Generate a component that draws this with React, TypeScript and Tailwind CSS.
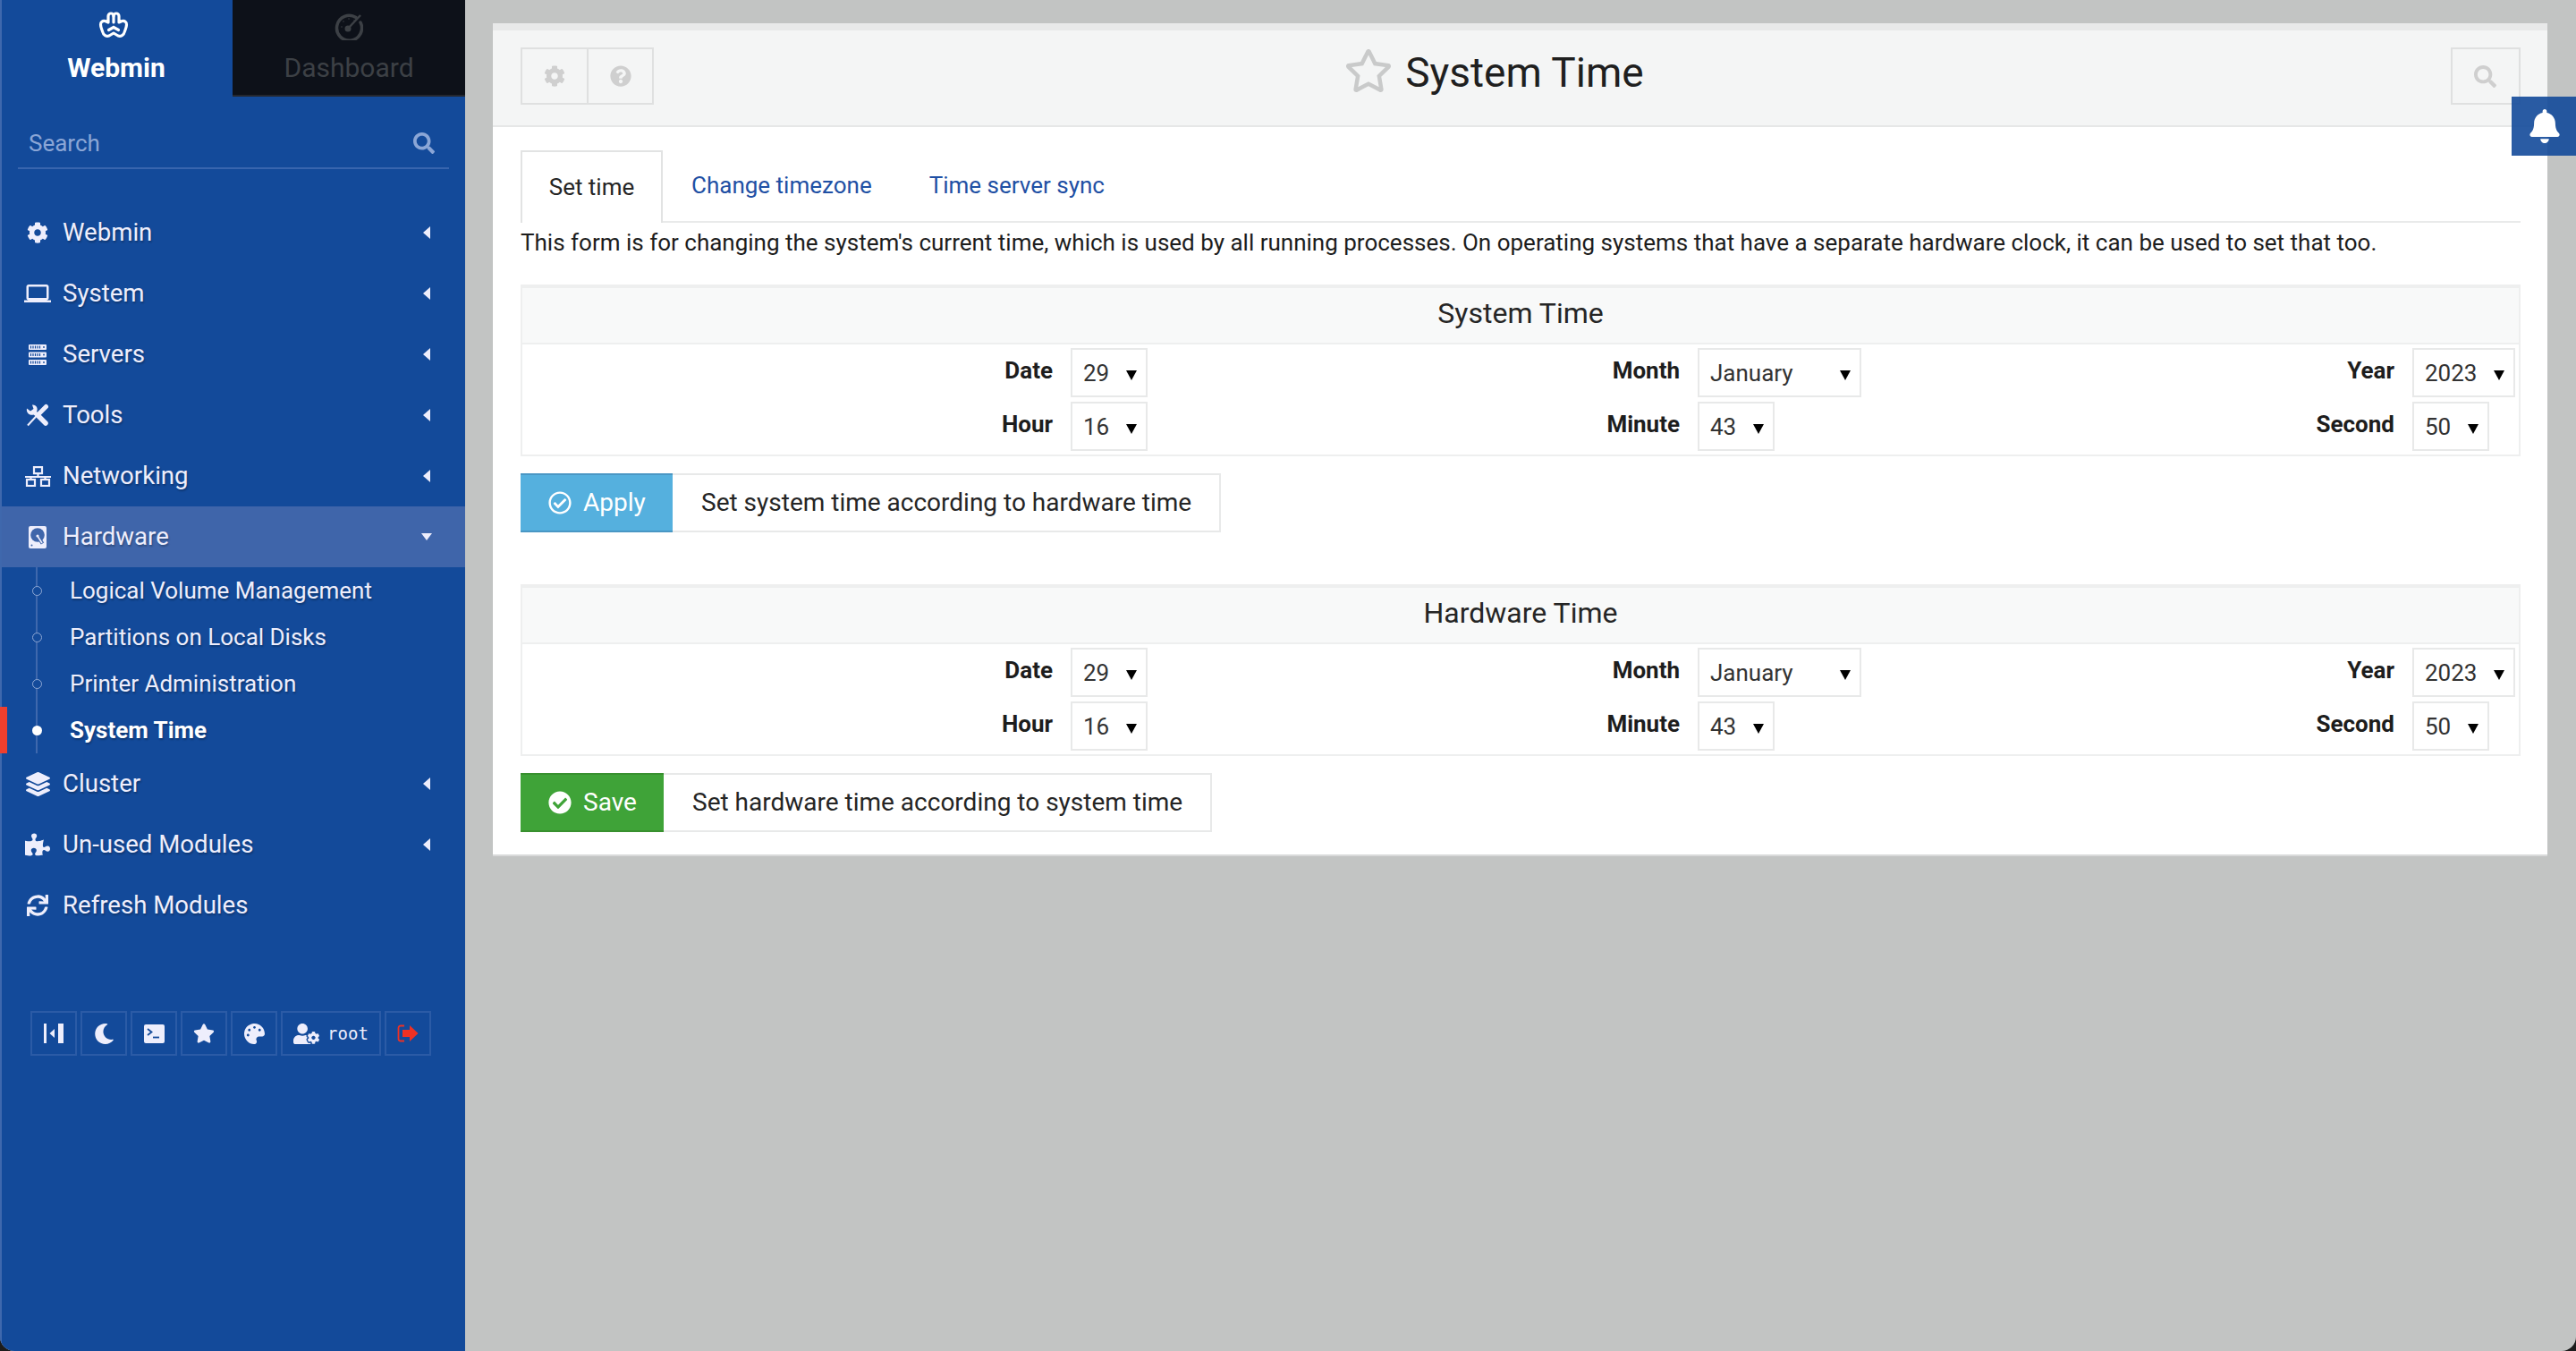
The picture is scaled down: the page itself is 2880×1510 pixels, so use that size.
import type { ReactNode } from "react";
import {
  FaBell,
  FaCheckCircle,
  FaCog,
  FaLayerGroup,
  FaMoon,
  FaPalette,
  FaPuzzlePiece,
  FaQuestionCircle,
  FaRegCheckCircle,
  FaRegStar,
  FaSearch,
  FaStar,
  FaSync,
  FaUserCog,
} from "react-icons/fa";
import { MdLaptop } from "react-icons/md";

function WebminLogo() {
  return (
    <svg viewBox="0 0 34 31" className="w-[34px] h-[31px]" fill="none" stroke="white" strokeWidth="3.2" strokeLinejoin="round" strokeLinecap="round">
      <path d="M11 13 V6 a3 3 0 0 1 6 0 a3 3 0 0 1 6 0 V13 L26.5 11.5 a3.8 3.8 0 0 1 5 4 C31.5 18 30.5 20 29.5 23 C28.5 27.5 25 29 22 28 L17 25 L12 28 C9 29 5.5 27.5 4.5 23 C3.5 20 2.5 18 2.5 15.5 a3.8 3.8 0 0 1 5 -4 L11 13" />
      <path d="M17 6 V13 M17 18.5 L11.5 21.5 M17 18.5 L22.5 21.5" />
    </svg>
  );
}

function DashboardIcon() {
  return (
    <svg viewBox="0 0 32 32" className="w-[32px] h-[32px]" fill="none" stroke="#3c4045">
      <path d="M24 6.5 A14 14 0 1 0 29 12" strokeWidth="3.5" strokeLinecap="round" />
      <circle cx="15" cy="19" r="3.5" fill="#3c4045" stroke="none" />
      <path d="M15 19 L29 4" strokeWidth="2.5" />
      <path d="M8 17v.1M10 11v.1M16 8v.1M22 10v.1" strokeWidth="1.5" strokeLinecap="round" />
    </svg>
  );
}

function ServersIcon() {
  return (
    <svg viewBox="0 0 20 23" className="w-[20px] h-[23px]">
      {[0, 8.5, 17].map((y) => (
        <g key={y}>
          <rect x="0" y={y} width="20" height="6" rx="1" fill="#eeeefc" />
          <path d={`M2.5 ${y + 1.5}v3M5 ${y + 1.5}v3M7.5 ${y + 1.5}v3M10 ${y + 1.5}v3M12.5 ${y + 1.5}v3`} stroke="#134a9a" strokeWidth="1.2" />
          <circle cx="17" cy={y + 3} r="0.9" fill="#134a9a" />
        </g>
      ))}
    </svg>
  );
}

function ToolsIcon() {
  return (
    <svg viewBox="0 0 26 26" className="w-[26px] h-[26px]" fill="#eeeefc">
      <path d="M2 24.5 L13.5 12" stroke="#eeeefc" strokeWidth="2" />
      <path d="M14 12 L22.5 3.5" stroke="#eeeefc" strokeWidth="5" strokeLinecap="round" />
      <path d="M1 5.5 L5 8.5 L8.5 6 L7 1.5 C11.5 1 14 5.5 12 9 L15 12 L12 15 L8.5 12.5 C4.5 14 0 10.5 1 5.5Z" />
      <path d="M14.5 14.5 L22 22" stroke="#eeeefc" strokeWidth="5.5" strokeLinecap="round" />
    </svg>
  );
}

function NetworkIcon() {
  return (
    <svg viewBox="0 0 29 23" className="w-[29px] h-[23px]" fill="none" stroke="#eeeefc" strokeWidth="2.2">
      <rect x="10" y="1.1" width="9" height="7" />
      <path d="M14.5 8 V12 M0 12 H29 M6.5 12 V15 M22.5 12 V15" />
      <rect x="2" y="15" width="9" height="7" />
      <rect x="18" y="15" width="9" height="7" />
    </svg>
  );
}

function DiskIcon() {
  return (
    <svg viewBox="0 0 20 25" className="w-[20px] h-[25px]">
      <rect width="20" height="25" rx="2" fill="#eeeefc" />
      <circle cx="10" cy="10" r="7.8" fill="#3f65aa" />
      <path d="M10.5 12 L15.5 19.5" stroke="#3f65aa" strokeWidth="4" />
      <path d="M10.5 12 L15 19" stroke="#eeeefc" strokeWidth="1.6" />
      <circle cx="10" cy="11" r="1.6" fill="#eeeefc" />
      <circle cx="3.5" cy="21.5" r="1" fill="#3f65aa" />
    </svg>
  );
}

function CollapseIcon() {
  return (
    <svg viewBox="0 0 24 24" className="w-[24px] h-[24px]" fill="#eeeefc">
      <rect x="1" y="1" width="3" height="22" />
      <rect x="17" y="1" width="6" height="22" />
      <path d="M13 7 V17 L7.5 12 Z" />
    </svg>
  );
}

function TerminalIcon() {
  return (
    <svg viewBox="0 0 23 21" className="w-[23px] h-[21px]">
      <rect width="23" height="21" rx="2" fill="#eeeefc" />
      <path d="M4 5 L8.5 8.5 L4 12" fill="none" stroke="#134a9a" strokeWidth="1.8" />
      <path d="M10 14.5 H17" stroke="#134a9a" strokeWidth="1.8" />
    </svg>
  );
}

function SignOutIcon() {
  return (
    <svg viewBox="0 0 24 20" className="w-[24px] h-[20px]" fill="#ee3124">
      <path d="M8 1.5 H4 a2.5 2.5 0 0 0 -2.5 2.5 V16 a2.5 2.5 0 0 0 2.5 2.5 H8" fill="none" stroke="#ee3124" strokeWidth="1.8" />
      <path d="M6 6 H14 V1 L23.5 10 L14 19 V14 H6 Z" />
    </svg>
  );
}

function MenuItem({ icon, label, open, active }: { icon: ReactNode; label: string; open?: boolean; active?: boolean }) {
  return (
    <div className={`h-[68px] flex items-center pl-[25px] pr-[37px] ${active ? "bg-[#3f65aa]" : ""}`}>
      <span className="w-[30px] flex justify-center shrink-0">{icon}</span>
      <span className="ml-[13px] flex-1 text-[27.6px] text-[#eeeefc] [text-shadow:1px_2px_2px_rgba(0,0,0,0.25)]">{label}</span>
      {open === undefined ? null : open ? (
        <span className="border-x-[6.5px] border-t-[8px] border-x-transparent border-t-[#eeeefc]" />
      ) : (
        <span className="mr-[2px] border-y-[7px] border-r-[8px] border-y-transparent border-r-[#eeeefc]" />
      )}
    </div>
  );
}

function SubItem({ label, current }: { label: string; current?: boolean }) {
  return (
    <div className={`h-[52px] flex items-center relative text-[26px] text-[#eeeefc] [text-shadow:1px_2px_2px_rgba(0,0,0,0.25)] ${current ? "font-bold text-white" : ""}`}>
      {current && <span className="absolute left-[-2px] top-0 w-[8px] h-[52px] bg-[#ee3f2e]" />}
      <span className={`absolute left-[34px] w-[11px] h-[11px] rounded-full ${current ? "bg-white" : "border border-[#8fa8d4] bg-[#134a9a]"}`} />
      <span className="ml-[76px] pt-[1px]">{label}</span>
    </div>
  );
}

function ToolButton({ children, wide }: { children: ReactNode; wide?: boolean }) {
  return (
    <div className={`h-[50px] flex items-center justify-center border-2 border-[#2b5ba6] ${wide ? "w-[112px]" : "w-[52px]"}`}>
      {children}
    </div>
  );
}

function Sidebar() {
  const icon = "text-[#eeeefc] text-[24px]";
  return (
    <aside className="w-[520px] h-full shrink-0 bg-[#134a9a] border-l-2 border-[#3f68ad] font-['Roboto',sans-serif]">
      <div className="flex h-[108px] -ml-[2px]">
        <div className="w-[260px] flex flex-col items-center pt-[12px]">
          <span className="-ml-[7px]"><WebminLogo /></span>
          <span className="mt-[13px] text-[30px] leading-[40px] font-bold text-white">Webmin</span>
        </div>
        <div className="w-[260px] flex flex-col items-center pt-[13px] bg-[#0d1119] border-b-2 border-[#24272e]">
          <DashboardIcon />
          <span className="mt-[11px] text-[30px] leading-[40px] text-[#3c4045]">Dashboard</span>
        </div>
      </div>
      <div className="mx-[18px] mt-[33px] h-[48px] pb-[8px] pl-[12px] pr-[16px] flex items-center justify-between border-b-2 border-[#3865ae]">
        <span className="text-[26px] text-[#8ba6d6]">Search</span>
        <FaSearch className="text-[#8ba6d6] text-[24px]" />
      </div>
      <nav className="mt-[37px]">
        <MenuItem icon={<FaCog className={icon} />} label="Webmin" open={false} />
        <MenuItem icon={<MdLaptop className="text-[#eeeefc] text-[32px]" />} label="System" open={false} />
        <MenuItem icon={<ServersIcon />} label="Servers" open={false} />
        <MenuItem icon={<ToolsIcon />} label="Tools" open={false} />
        <MenuItem icon={<NetworkIcon />} label="Networking" open={false} />
        <MenuItem icon={<DiskIcon />} label="Hardware" open active />
        <div className="relative h-[208px]">
          <span className="absolute left-[38px] top-0 w-[2px] h-[208px] bg-[#3f68ad]" />
          <SubItem label="Logical Volume Management" />
          <SubItem label="Partitions on Local Disks" />
          <SubItem label="Printer Administration" />
          <SubItem label="System Time" current />
        </div>
        <MenuItem icon={<FaLayerGroup className="text-[#eeeefc] text-[27px]" />} label="Cluster" open={false} />
        <MenuItem icon={<FaPuzzlePiece className="text-[#eeeefc] text-[28px]" />} label="Un-used Modules" open={false} />
        <MenuItem icon={<FaSync className={icon} />} label="Refresh Modules" />
      </nav>
      <div className="mt-[84px] ml-[32px] flex gap-[4px]">
        <ToolButton><CollapseIcon /></ToolButton>
        <ToolButton><FaMoon className="text-[#eeeefc] text-[23px]" /></ToolButton>
        <ToolButton><TerminalIcon /></ToolButton>
        <ToolButton><FaStar className="text-[#eeeefc] text-[24px]" /></ToolButton>
        <ToolButton><FaPalette className="text-[#eeeefc] text-[23px]" /></ToolButton>
        <ToolButton wide>
          <FaUserCog className="text-[#eeeefc] text-[29px]" />
          <span className="ml-[9px] text-[19px] text-[#eeeefc] font-['DejaVu_Sans_Mono',monospace]">root</span>
        </ToolButton>
        <ToolButton><SignOutIcon /></ToolButton>
      </div>
    </aside>
  );
}

function Field({ value, wide }: { value: string; wide?: "month" | "year" }) {
  const width = wide === "month" ? "w-[183px]" : wide === "year" ? "w-[115px]" : "w-[86px]";
  return (
    <div className={`relative h-[55px] ${width} border-2 border-[#e8e9e9] bg-white`}>
      <select
        defaultValue={value}
        className="w-full h-full appearance-none bg-transparent pl-[12px] pt-[2px] text-[26px] text-[#333] font-['Roboto',sans-serif] outline-none"
      >
        <option>{value}</option>
      </select>
      <span className="absolute right-[10px] top-[23px] border-x-[6px] border-t-[11px] border-x-transparent border-t-black" />
    </div>
  );
}

function Label({ children }: { children: string }) {
  return <div className="pr-[20px] pb-[4px] text-right text-[26px] font-bold text-[#1d1d1d] self-center">{children}</div>;
}

function TimeTable({ title }: { title: string }) {
  return (
    <div className="border-2 border-t-4 border-[#eeefef] h-[192px]">
      <div className="h-[63px] pb-[6px] border-b-2 border-[#eeefef] bg-[#f8f9f9] flex items-center justify-center text-[32px] text-[#252525]">
        {title}
      </div>
      <div className="mt-[4px] grid grid-cols-[613px_400px_301px_399px_400px_1fr] grid-rows-[55px_55px] gap-y-[5px]">
        <Label>Date</Label>
        <Field value="29" />
        <Label>Month</Label>
        <Field value="January" wide="month" />
        <Label>Year</Label>
        <Field value="2023" wide="year" />
        <Label>Hour</Label>
        <Field value="16" />
        <Label>Minute</Label>
        <Field value="43" />
        <Label>Second</Label>
        <Field value="50" />
      </div>
    </div>
  );
}

function ActionRow({ icon, label, hint, color, width }: { icon: ReactNode; label: string; hint: string; color: string; width: string }) {
  return (
    <div className="flex h-[66px] w-fit text-[28px]">
      <div className={`${width} ${color} flex items-center pl-[31px] gap-[13px] text-white border-y-2`}>
        {icon}
        <span>{label}</span>
      </div>
      <div className="flex items-center pl-[32px] pr-[31px] border-2 border-l-0 border-[#e8e9e9] text-[#252525]">{hint}</div>
    </div>
  );
}

function TopButton({ children, className }: { children: ReactNode; className: string }) {
  return <div className={`h-[64px] flex items-center justify-center border-2 border-[#dfe0e0] ${className}`}>{children}</div>;
}

export default function App() {
  return (
    <div className="w-[2880px] h-[1510px] bg-[#1c1c1c] font-['Roboto',sans-serif]">
      <div className="relative w-full h-full flex overflow-hidden rounded-b-[16px] bg-[#c2c4c3]">
        <Sidebar />
        <main className="flex-1 pl-[31px] pr-[32px] pt-[26px]">
          <div className="bg-white border-b-2 border-[#d9dada]">
            <div className="h-[8px] bg-[#e8e9e9]" />
            <header className="h-[108px] bg-[#f4f5f5] border-b-2 border-[#e6e7e7] px-[31px] pr-[30px] pt-[19px] flex justify-between">
              <div className="flex">
                <TopButton className="w-[76px]"><FaCog className="text-[#cfcfcf] text-[24px]" /></TopButton>
                <TopButton className="w-[75px] -ml-[2px]"><FaQuestionCircle className="text-[#cfcfcf] text-[24px]" /></TopButton>
              </div>
              <div className="flex items-center h-[64px] -mt-[6px] mr-[130px] gap-[14px] text-[46px] text-[#1f1f1f]">
                <FaRegStar className="text-[#c9caca] text-[54px]" />
                <h1 className="mt-[4px]">System Time</h1>
              </div>
              <TopButton className="w-[78px]"><FaSearch className="text-[#cfcfcf] text-[25px]" /></TopButton>
            </header>
            <div className="px-[31px] pr-[30px] pb-[25px]">
              <div className="mt-[26px] h-[81px] flex border-b-2 border-[#e9eaea] text-[26px]">
                <div className="w-[159px] h-[81px] flex items-center justify-center border-2 border-b-0 border-[#e2e3e3] bg-white text-[#252525]">Set time</div>
                <a className="ml-[32px] flex items-center text-[#1f50a4]">Change timezone</a>
                <a className="ml-[64px] flex items-center text-[#1f50a4]">Time server sync</a>
              </div>
              <p className="h-[40px] mt-[2px] leading-[40px] text-[26px] text-[#1d1d1d] whitespace-nowrap">
                This form is for changing the system's current time, which is used by all running processes. On operating systems that have a separate hardware clock, it can be used to set that too.
              </p>
              <div className="mt-[27px]"><TimeTable title="System Time" /></div>
              <div className="mt-[19px]">
                <ActionRow
                  icon={<FaRegCheckCircle className="text-[26px]" />}
                  label="Apply"
                  hint="Set system time according to hardware time"
                  color="bg-[#55b0de] border-[#4a97c4]"
                  width="w-[170px]"
                />
              </div>
              <div className="mt-[58px]"><TimeTable title="Hardware Time" /></div>
              <div className="mt-[19px]">
                <ActionRow
                  icon={<FaCheckCircle className="text-[26px]" />}
                  label="Save"
                  hint="Set hardware time according to system time"
                  color="bg-[#3fa338] border-[#38902f]"
                  width="w-[160px]"
                />
              </div>
            </div>
          </div>
        </main>
        <div className="absolute right-0 top-[108px] w-[72px] h-[66px] pl-[2px] bg-[#134a9a]/90 flex items-center justify-center">
          <FaBell className="text-white text-[38px]" />
        </div>
      </div>
    </div>
  );
}
